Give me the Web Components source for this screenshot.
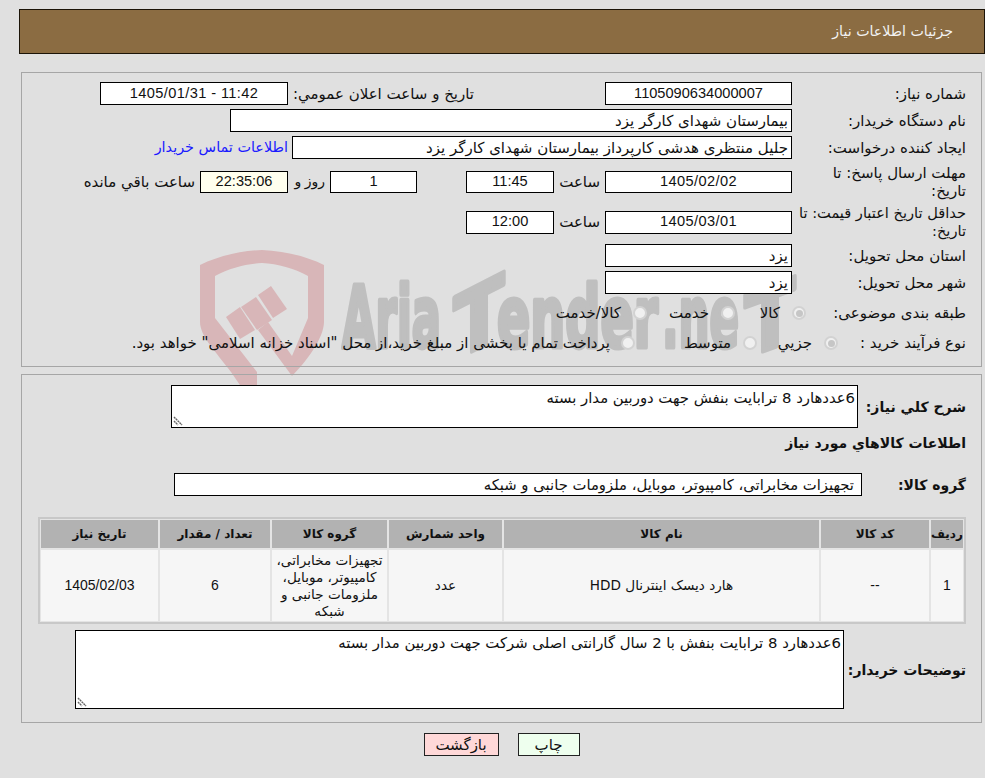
<!DOCTYPE html>
<html lang="fa" dir="rtl">
<head>
<meta charset="utf-8">
<title>جزئیات اطلاعات نیاز</title>
<style>
  html, body { margin: 0; padding: 0; background: #e0e0e0; }
  body { font: 15px/1.2 "DejaVu Sans", sans-serif; color: #111; width: 985px; height: 778px; overflow: hidden; }
  need-page { direction: rtl; }
  .num { font-family: "Liberation Sans", "DejaVu Sans", sans-serif; font-size: 14.6px; }
  .date { letter-spacing: .4px; }
  .t { display: inline-block; white-space: nowrap; padding-right: 5px; box-sizing: border-box; }
</style>
</head>
<body>

<need-page>
  <page-header slot="header">جزئیات اطلاعات نیاز</page-header>

  <form-panel class="top">
    <form-row label="شماره نیاز:">
      <text-field w="187" center class="num">1105090634000007</text-field>
      <span class="t" style="width:131px;padding-right:0"></span>
      <span class="t" style="width:186px;padding-right:0">تاریخ و ساعت اعلان عمومي:</span>
      <text-field w="188" center class="num date">11:42 - 1405/01/31</text-field>
    </form-row>
    <form-row label="نام دستگاه خریدار:">
      <text-field w="562">بیمارستان شهدای کارگر یزد</text-field>
    </form-row>
    <form-row label="ایجاد کننده درخواست:">
      <text-field w="500">جلیل منتظری هدشی کارپرداز بیمارستان شهدای کارگر یزد</text-field>
      <a style="color:#1a1aff;text-decoration:none;margin-right:4px;white-space:nowrap;font-size:14.4px">اطلاعات تماس خریدار</a>
    </form-row>
    <form-row label="مهلت ارسال پاسخ: تا&#10;تاریخ:" h="37">
      <text-field w="187" h="22" center class="num date">1405/02/02</text-field>
      <span class="t" style="width:51px">ساعت</span>
      <text-field w="88" h="22" center class="num">11:45</text-field>
      <span style="width:49px"></span>
      <text-field w="87" h="22" center class="num">1</text-field>
      <span class="t" style="width:42px;font-size:14px;word-spacing:-1px">روز و</span>
      <text-field w="88" h="22" center cream class="num">22:35:06</text-field>
      <span class="t">ساعت باقي مانده</span>
    </form-row>
    <form-row label="حداقل تاریخ اعتبار قیمت: تا&#10;تاریخ:" h="36" lf="14.6">
      <text-field w="187" center class="num date">1405/03/01</text-field>
      <span class="t" style="width:51px">ساعت</span>
      <text-field w="88" center class="num">12:00</text-field>
    </form-row>
    <form-row label="استان محل تحویل:">
      <text-field w="187">یزد</text-field>
    </form-row>
    <form-row label="شهر محل تحویل:">
      <text-field w="187">یزد</text-field>
    </form-row>
    <form-row label="طبقه بندی موضوعی:" h="26" lw="161" style="margin-top:2px">
      <radio-option w="71" checked>کالا</radio-option>
      <radio-option w="88">خدمت</radio-option>
      <radio-option w="90">کالا/خدمت</radio-option>
    </form-row>
    <form-row label="نوع فرآیند خرید :" h="26" lw="129">
      <radio-option w="81" checked>جزيي</radio-option>
      <radio-option w="122">متوسط</radio-option>
      <radio-option w="14"></radio-option>
      <span class="t" style="padding-right:11px">پرداخت تمام يا بخشی از مبلغ خرید،از محل "اسناد خزانه اسلامی" خواهد بود.</span>
    </form-row>
  </form-panel>

  <form-panel class="bottom">
    <form-row label="شرح كلي نياز:" strong lw="109" h="43">
      <note-box w="687" h="43">6عددهارد 8 ترابایت بنفش جهت دوربین مدار بسته</note-box>
    </form-row>
    <form-row label="اطلاعات كالاهاي مورد نياز" strong lw="400" h="24" style="margin-top:3px"></form-row>
    <form-row label="گروه کالا:" strong lw="105" style="margin-top:18px">
      <text-field w="688" pad="7" style="font-size:14.8px">تجهیزات مخابراتی، کامپیوتر، موبایل، ملزومات جانبی و شبکه</text-field>
    </form-row>
    <goods-table></goods-table>
    <form-row label="توضیحات خریدار:" strong lw="123" h="79" style="margin-top:7px">
      <note-box w="769" h="79">6عددهارد 8 ترابایت بنفش با 2 سال گارانتی اصلی شرکت جهت دوربین مدار بسته</note-box>
    </form-row>
  </form-panel>

  <div class="actions" slot="actions">
    <action-button w="62" color="#eeffee">چاپ</action-button>
    <action-button w="75" color="#ffd8d8">بازگشت</action-button>
  </div>
</need-page>

<script>
// small helper, every element below just fills its own shadow root
function shadow(el, html) {
    el.attachShadow({ mode: 'open' });
    el.shadowRoot.innerHTML = html;
}

class NeedPage extends HTMLElement {
    constructor() {
        super();
        shadow(this, `
            <style>
                :host { display: block; position: relative; padding: 9px 0 0 19px; height: 769px; }
                .mark { position: absolute; left: 190px; top: 240px; z-index: 0; }
                .body { position: relative; z-index: 1; }
                ::slotted(.actions) { display: flex; justify-content: center; gap: 19px; margin: 10px 3px 0 0; width: 961px; }
            </style>
            <water-mark class="mark"></water-mark>
            <div class="body">
                <slot name="header"></slot>
                <slot></slot>
                <slot name="actions"></slot>
            </div>
        `);
    }
}

class PageHeader extends HTMLElement {
    constructor() {
        super();
        shadow(this, `
            <style>
                :host {
                    display: flex; align-items: center; box-sizing: border-box;
                    width: 966px; height: 45px; padding: 0 31px 0 0;
                    background: #8b6c42; border: 1px solid #1c1408;
                    color: #f2f2f2; font-size: 14.2px; margin-bottom: 18px;
                }
            </style>
            <slot></slot>
        `);
    }
}

class FormPanel extends HTMLElement {
    constructor() {
        super();
        shadow(this, `
            <style>
                :host {
                    display: flex; flex-direction: column; box-sizing: border-box;
                    width: 961px; margin: 0 3px 7px 0; gap: 4px;
                    padding: 9px 14px 10px 0;
                    border: 1px solid #a6a6a6;
                }
                :host(.bottom) { gap: 0; padding: 10px 14px 13px 0; margin-bottom: 0; }
            </style>
            <slot></slot>
        `);
    }
}

class FormRow extends HTMLElement {
    constructor() {
        super();
        shadow(this, `
            <style>
                :host { display: grid; align-items: center; min-height: 23px; }
                .label { white-space: pre-line; line-height: 18px; padding-right: 1px; }
                :host([strong]) .label { font-weight: bold; font-size: 14px; white-space: nowrap; }
                .content { display: flex; align-items: center; }
            </style>
            <div class="label"></div>
            <div class="content"><slot></slot></div>
        `);
    }
    connectedCallback() {
        const lw = this.getAttribute('lw') || 175;
        this.style.gridTemplateColumns = lw + 'px 1fr';
        this.style.height = (this.getAttribute('h') || 23) + 'px';
        const label = this.shadowRoot.querySelector('.label');
        label.textContent = this.getAttribute('label');
        if (this.hasAttribute('lf')) label.style.fontSize = this.getAttribute('lf') + 'px';
    }
}

class TextField extends HTMLElement {
    constructor() {
        super();
        shadow(this, `
            <style>
                :host {
                    display: flex; align-items: center; flex: none; box-sizing: border-box;
                    height: 23px; background: #fff; border: 1px solid #000;
                    padding: 0 3px; white-space: nowrap; overflow: hidden;
                }
                :host([center]) { justify-content: center; }
                :host([cream]) { background: #ffffee; }
            </style>
            <slot></slot>
        `);
    }
    connectedCallback() {
        this.style.width = this.getAttribute('w') + 'px';
        if (this.hasAttribute('h')) this.style.height = this.getAttribute('h') + 'px';
        if (this.hasAttribute('pad')) this.style.paddingRight = this.getAttribute('pad') + 'px';
    }
}

class RadioOption extends HTMLElement {
    constructor() {
        super();
        shadow(this, `
            <style>
                :host { display: flex; align-items: center; flex: none; gap: 12px; white-space: nowrap; }
                .dot {
                    flex: none; width: 14px; height: 14px; box-sizing: border-box; border-radius: 50%;
                    background: #f0f0f0; border: 2px solid #d2d2d2; display: flex; align-items: center; justify-content: center;
                }
                :host([checked]) .dot::after { content: ""; width: 7px; height: 7px; border-radius: 50%; background: #c6c6c6; }
            </style>
            <span class="dot"></span><slot></slot>
        `);
    }
    connectedCallback() {
        this.style.width = this.getAttribute('w') + 'px';
    }
}

class NoteBox extends HTMLElement {
    constructor() {
        super();
        shadow(this, `
            <style>
                :host {
                    display: block; position: relative; flex: none; box-sizing: border-box;
                    background: #fff; border: 1px solid #000; padding: 3px 2px; line-height: 18px; font-size: 14.85px;
                }
                svg { position: absolute; left: 1px; bottom: 1px; }
            </style>
            <slot></slot>
            <svg width="10" height="10" viewBox="0 0 10 10"><path d="M1 1L9 9M1 5L5 9" stroke="#666" stroke-width="1.4" stroke-dasharray="2 .6" fill="none"/></svg>
        `);
    }
    connectedCallback() {
        this.style.width = this.getAttribute('w') + 'px';
        this.style.height = this.getAttribute('h') + 'px';
    }
}

class GoodsTable extends HTMLElement {
    constructor() {
        super();
        const head = ['ردیف', 'کد کالا', 'نام کالا', 'واحد شمارش', 'گروه کالا', 'تعداد / مقدار', 'تاریخ نیاز'];
        const widths = [32, 108, 315, 113, 115, 110, 117];
        const row = ['1', '--', 'هارد دیسک اینترنال HDD', 'عدد', 'تجهیزات مخابراتی،<br>کامپیوتر، موبایل،<br>ملزومات جانبی و<br>شبکه', '6', '1405/02/03'];
        shadow(this, `
            <style>
                :host { display: block; margin: 21px 1px 0 0; width: 928px; height: 106px; }
                table {
                    box-sizing: border-box; border-collapse: separate; border-spacing: 2px;
                    border: 1px solid #c8c8c8; box-shadow: inset 0 0 0 1px #c8c8c8;
                    background: #e4e4e4; width: 928px; table-layout: fixed; height: 106px;
                }
                th { background: #b2b2b2; font-size: 12px; font-weight: bold; height: 28px; padding: 0; white-space: nowrap; }
                td { background: #f6f6f6; font-size: 13.6px; text-align: center; padding: 0; line-height: 17px; height: 71px; white-space: nowrap; }
                td.n { font-family: "Liberation Sans", "DejaVu Sans", sans-serif; font-size: 14px; }
            </style>
            <table>
                <colgroup>${widths.map(w => `<col style="width:${w}px">`).join('')}</colgroup>
                <tr>${head.map(h => `<th>${h}</th>`).join('')}</tr>
                <tr>${row.map((c, i) => `<td class="${i < 2 || i > 4 ? 'n' : ''}">${c}</td>`).join('')}</tr>
            </table>
        `);
    }
}

class ActionButton extends HTMLElement {
    constructor() {
        super();
        shadow(this, `
            <style>
                :host {
                    display: flex; align-items: center; justify-content: center; box-sizing: border-box;
                    height: 23px; border: 1px solid #222; cursor: pointer;
                }
            </style>
            <slot></slot>
        `);
    }
    connectedCallback() {
        this.style.width = this.getAttribute('w') + 'px';
        this.style.background = this.getAttribute('color');
    }
}

// Faded shield and site name behind the two panels
class WaterMark extends HTMLElement {
    constructor() {
        super();
        shadow(this, `
            <style>
                :host { display: block; direction: ltr; width: 640px; height: 170px; pointer-events: none; }
                svg { display: block; overflow: visible; }
                text { font-family: "DejaVu Sans", sans-serif; font-weight: bold; fill: #bfbfbf; stroke: #bfbfbf; stroke-width: 5px; stroke-linejoin: round; }
            </style>
            <svg width="640" height="170" viewBox="190 240 640 170">
                <g fill="#d8b6b8">
                    <path d="M262 250C240 251 218 256 200 265L200 322C200 336 216 352 231 372L257 410L257 372L215 318L215 276C230 268 246 264 262 263C278 264 294 268 308 276L308 318L292 356L268 322L258 330L292 376C306 362 324 338 324 322L324 265C306 256 284 251 262 250Z"/>
                    <path d="M226 317L240 307L255 330L240 339Z"/>
                    <path d="M241 307L256 297L272 320L257 330Z"/>
                    <path d="M258 295L271 286L287 309L273 318Z"/>
                </g>
                <text x="342" y="347" font-size="86" textLength="99" lengthAdjust="spacingAndGlyphs">Aria</text>
                <text transform="translate(480 347) skewY(-27)" x="-26" y="0" font-size="86" textLength="50" lengthAdjust="spacingAndGlyphs">T</text>
                <text x="497" y="347" font-size="86" textLength="161" lengthAdjust="spacingAndGlyphs">ender</text>
                <text x="662" y="347" font-size="86" textLength="77" lengthAdjust="spacingAndGlyphs">.ne</text>
                <text transform="translate(771 348) skewY(-20)" x="-26" y="0" font-size="86" textLength="50" lengthAdjust="spacingAndGlyphs">T</text>
            </svg>
        `);
    }
}

customElements.define('need-page', NeedPage);
customElements.define('page-header', PageHeader);
customElements.define('form-panel', FormPanel);
customElements.define('form-row', FormRow);
customElements.define('text-field', TextField);
customElements.define('radio-option', RadioOption);
customElements.define('note-box', NoteBox);
customElements.define('goods-table', GoodsTable);
customElements.define('action-button', ActionButton);
customElements.define('water-mark', WaterMark);
</script>
</body>
</html>
